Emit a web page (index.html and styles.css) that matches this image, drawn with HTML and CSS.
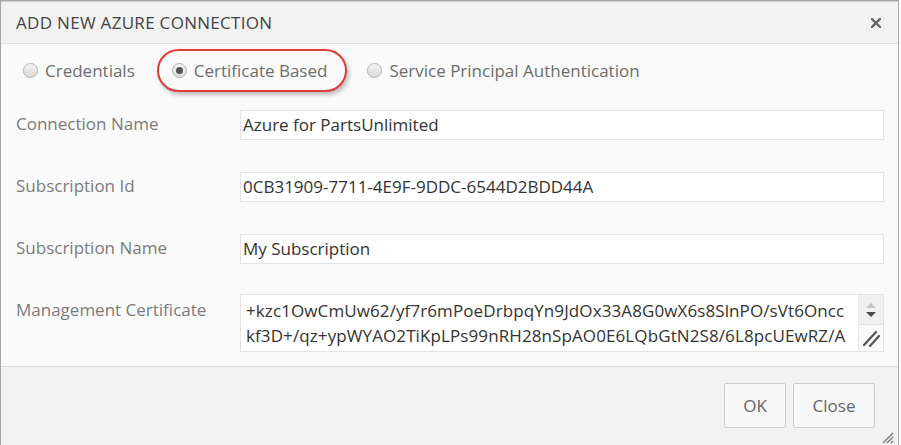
FILE: index.html
```html
<!DOCTYPE html>
<html>
<head>
<meta charset="utf-8">
<link rel="stylesheet" href="styles.css">
</head>
<body>
<div class="dialog">
  <div class="titlebar">
    <span class="title">ADD NEW AZURE CONNECTION</span>
    <svg class="close-x" width="10" height="10" viewBox="0 0 10 10"><path d="M1 1L9 9M9 1L1 9" stroke="#666" stroke-width="2.4" stroke-linecap="square"/></svg>
  </div>
  <div class="content">
    <div class="radios">
      <label class="radio"><span class="dot"></span>Credentials</label>
      <label class="radio selected"><span class="dot on"></span>Certificate Based<span class="highlight"></span></label>
      <label class="radio"><span class="dot"></span>Service Principal Authentication</label>
    </div>
    <div class="form">
      <div class="label">Connection Name</div>
      <div class="input">Azure for PartsUnlimited</div>
      <div class="label">Subscription Id</div>
      <div class="input">0CB31909-7711-4E9F-9DDC-6544D2BDD44A</div>
      <div class="label">Subscription Name</div>
      <div class="input">My Subscription</div>
      <div class="label">Management Certificate</div>
      <div class="textarea">
        <div class="ta-text">+kzc1OwCmUw62/yf7r6mPoeDrbpqYn9JdOx33A8G0wX6s8SlnPO/sVt6Oncc<br>kf3D+/qz+ypWYAO2TiKpLPs99nRH28nSpAO0E6LQbGtN2S8/6L8pcUEwRZ/A</div>
        <div class="ta-side">
          <div class="spin">
            <svg width="14" height="20" viewBox="0 0 14 20"><path d="M2 8L7 3L12 8Z" fill="#c4c4c4"/><path d="M2 12L12 12L7 17Z" fill="#4a4a4a"/></svg>
          </div>
          <div class="grip">
            <svg width="20" height="20" viewBox="0 0 20 20"><path d="M3 17L15 4M9 18L18 8" stroke="#555" stroke-width="2.2" stroke-linecap="round"/></svg>
          </div>
        </div>
      </div>
    </div>
  </div>
  <div class="footer">
    <button class="btn btn-ok">OK</button>
    <button class="btn btn-close">Close</button>
    <svg class="resize" width="14" height="14" viewBox="0 0 14 14"><path d="M13 3L3 13M13 7L7 13M13 11L11 13" stroke="#777" stroke-width="1.3"/></svg>
  </div>
</div>
</body>
</html>
```
FILE: styles.css
```css
* { box-sizing: border-box; }
html, body { margin: 0; padding: 0; background: #ffffff; }
body {
  font-family: "Open Sans", "Noto Sans", sans-serif;
  width: 901px;
  height: 445px;
  overflow: hidden;
}
.dialog {
  width: 899px;
  height: 446px;
  border: 1px solid #a6a6a6;
  border-bottom: none;
  display: flex;
  flex-direction: column;
  background: #fafafa;
}
.titlebar {
  height: 43px;
  background: #f2f2f2;
  border-top: 1px solid #cfcfcf;
  border-bottom: 1px solid #dedede;
  display: flex;
  align-items: center;
  justify-content: space-between;
  padding: 0 17px 0 15px;
}
.title {
  font-size: 17px;
  letter-spacing: 0.3px;
  color: #444;
}
.close-x { display: block; margin-top: 1px; }
.content {
  flex: 0 0 auto;
  height: 322px;
  padding: 0 15px 0 15px;
  background: #fafafa;
}
.radios {
  height: 52px;
  display: flex;
  align-items: center;
  padding-left: 7px;
  padding-top: 1px;
}
.radio {
  position: relative;
  display: flex;
  align-items: center;
  font-size: 17px;
  color: #6d6d6d;
  margin-right: 37px;
}
.radio.selected { margin-right: 40px; }
.dot {
  width: 15px;
  height: 15px;
  border-radius: 50%;
  border: 1px solid #b3b3b3;
  background: linear-gradient(#f4f4f4, #d9d9d9);
  margin-right: 7px;
  display: flex;
  align-items: center;
  justify-content: center;
}
.dot.on::after {
  content: "";
  width: 7px;
  height: 7px;
  border-radius: 50%;
  background: #555;
}
.highlight {
  position: absolute;
  left: -15px;
  right: -20px;
  top: -10px;
  bottom: -10px;
  border: 2px solid #dd3b36;
  border-radius: 22px;
  box-shadow: 2px 3px 4px rgba(0,0,0,0.25);
  pointer-events: none;
}
.form {
  display: grid;
  grid-template-columns: 224px 644px;
  row-gap: 32px;
  padding-top: 14px;
}
.label {
  font-size: 17px;
  color: #7a7a7a;
  padding-top: 2px;
}
.input {
  height: 30px;
  background: #fff;
  border: 1px solid #e4e4e4;
  font-size: 17px;
  color: #333;
  padding: 1px 2px 0 2px;
  line-height: 25px;
  white-space: nowrap;
  overflow: hidden;
}
.textarea {
  height: 58px;
  background: #fff;
  border: 1px solid #e4e4e4;
  display: flex;
  margin-top: -2px;
}
.ta-text {
  flex: 1;
  font-size: 17px;
  letter-spacing: 0.1px;
  color: #333;
  line-height: 25px;
  padding: 3px 0 0 5px;
  white-space: nowrap;
  overflow: hidden;
}
.ta-side {
  width: 25px;
  display: flex;
  flex-direction: column;
  background: #f0f0f0;
  border-left: 1px solid #e8e8e8;
}
.spin {
  height: 30px;
  display: flex;
  align-items: center;
  justify-content: center;
  border-bottom: 1px solid #e0e0e0;
}
.grip {
  flex: 1;
  display: flex;
  align-items: center;
  justify-content: center;
  background: #fafafa;
}
.footer {
  flex: 1;
  background: #f2f2f2;
  border-top: 1px solid #dcdcdc;
  display: flex;
  justify-content: flex-end;
  align-items: flex-start;
  padding: 16px 23px 0 0;
  position: relative;
}
.btn {
  height: 45px;
  background: #f7f7f7;
  border: 1px solid #cfcfcf;
  border-radius: 2px;
  font-family: "Open Sans", "Noto Sans", sans-serif;
  font-size: 17px;
  color: #666;
  padding: 0;
}
.btn-ok { width: 62px; margin-right: 7px; }
.btn-close { width: 82px; }
.resize {
  position: absolute;
  right: 4px;
  bottom: 2px;
}
```
